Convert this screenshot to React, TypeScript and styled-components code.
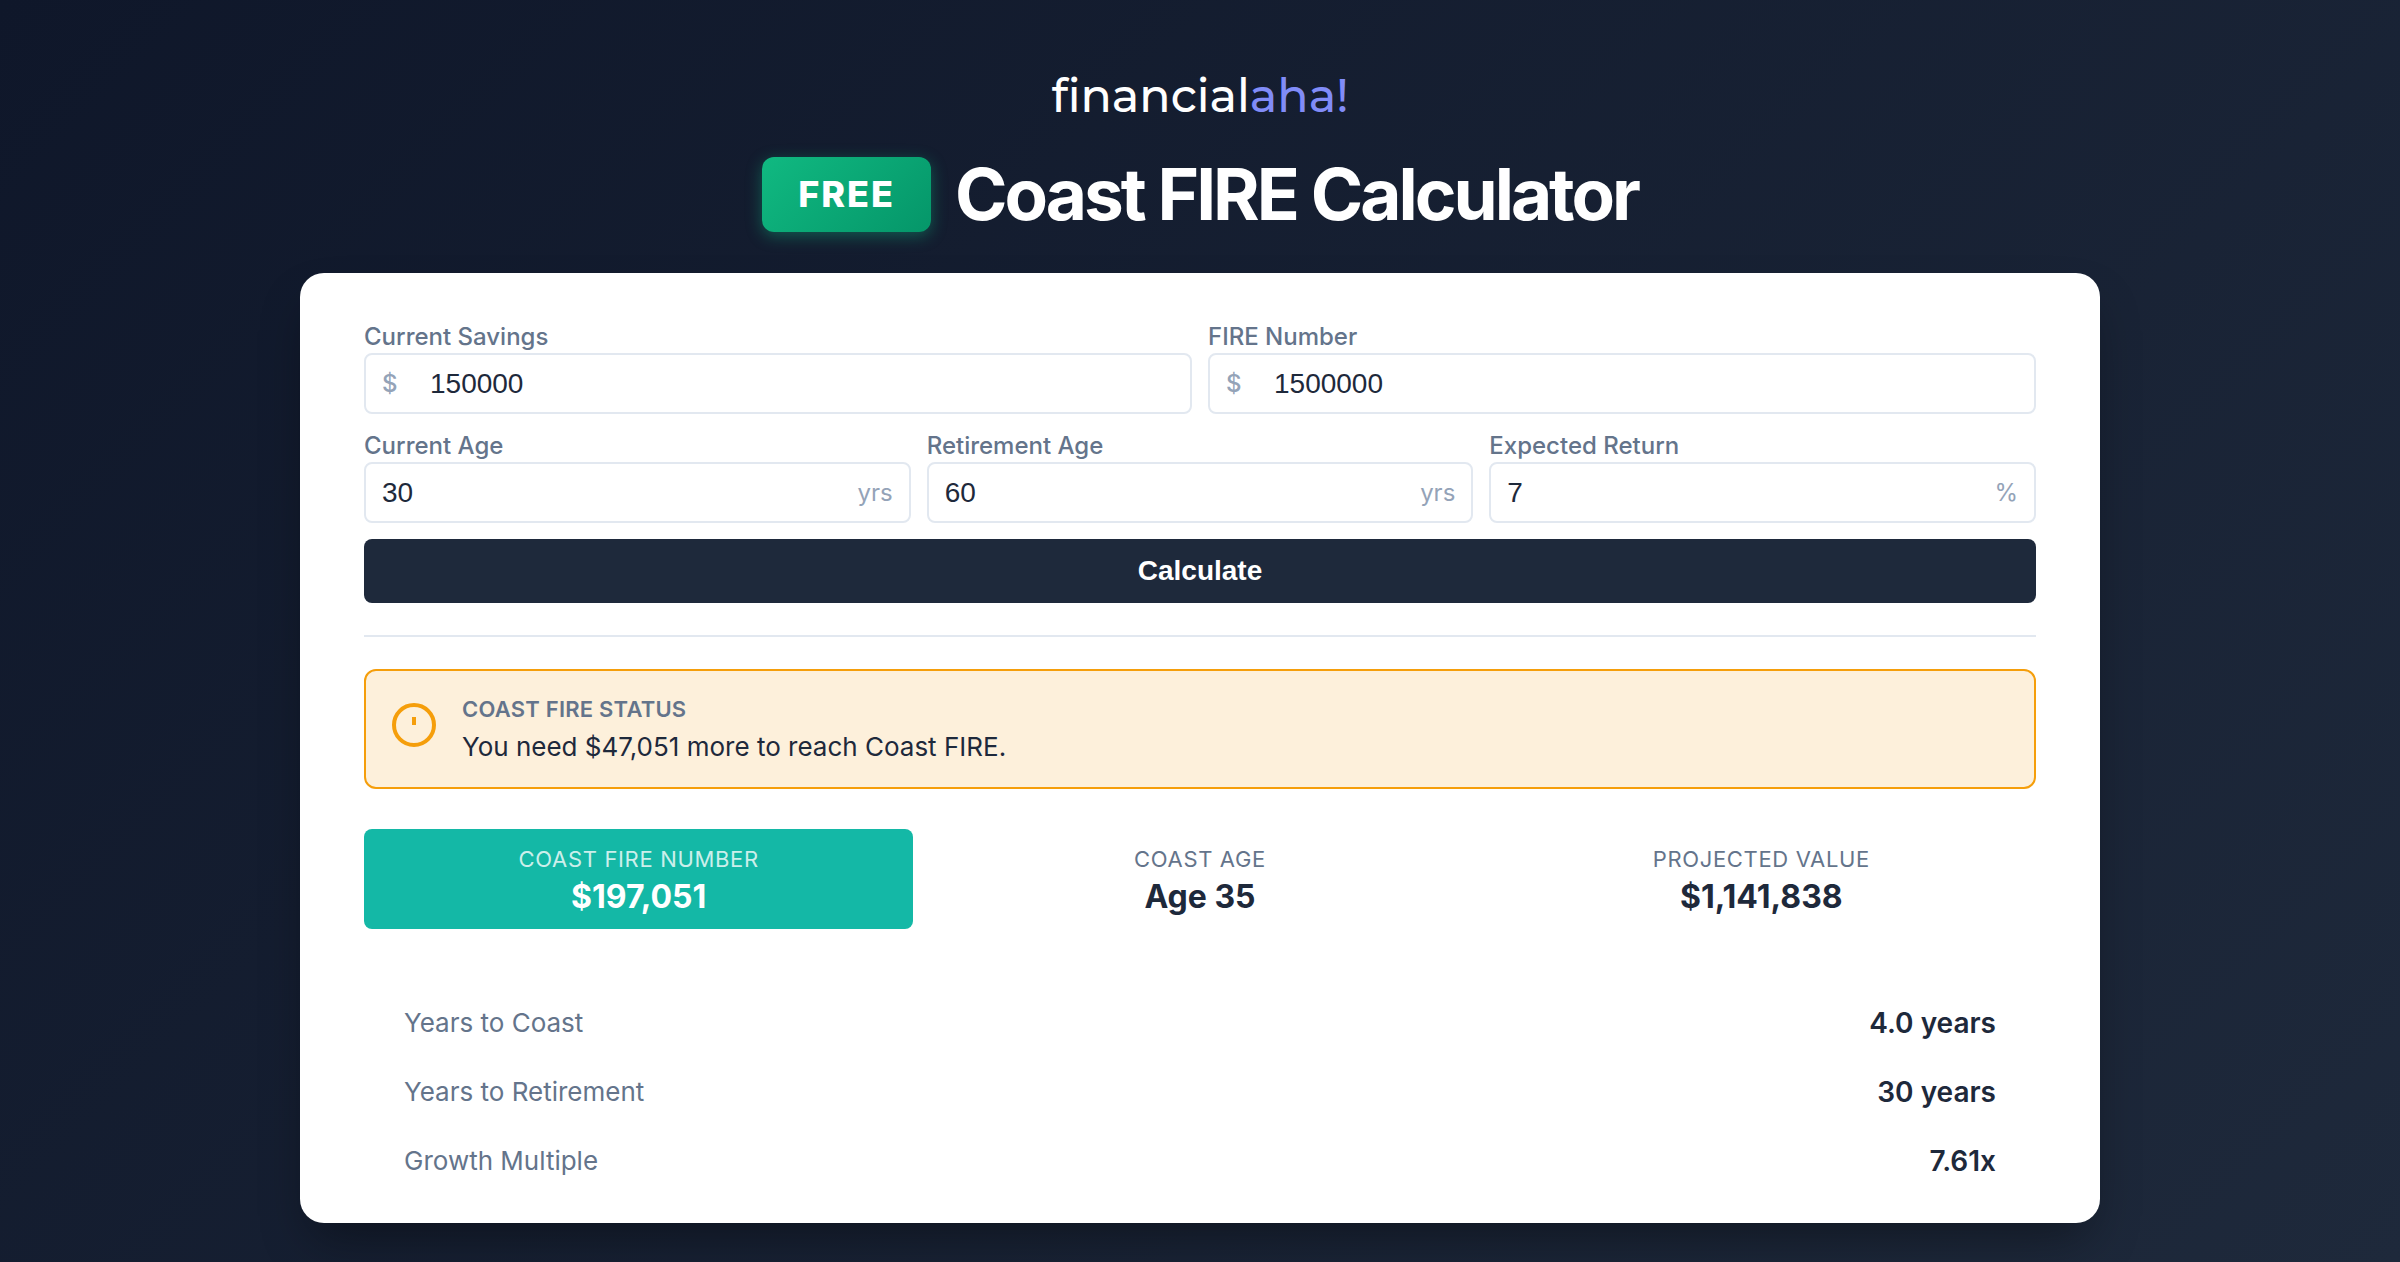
import React, { useState } from "react";
import styled, { createGlobalStyle, css } from "styled-components";

const GlobalStyle = createGlobalStyle`
  *, *::before, *::after { box-sizing: border-box; }
  body {
    margin: 0;
    font-family: Inter, "Liberation Sans", sans-serif;
    color: #1e293b;
    background: #0f172a;
  }
`;

const Page = styled.div`
  min-height: 100vh;
  display: flex;
  flex-direction: column;
  align-items: center;
  padding: 72px 40px 38px;
  background: linear-gradient(135deg, #0f172a 0%, #1e293b 100%);
`;

const Brand = styled.a`
  font-family: Montserrat, Inter, sans-serif;
  font-size: 46px;
  line-height: 48px;
  font-weight: 500;
  color: #ffffff;
  text-decoration: none;
`;

const BrandAccent = styled.span`
  color: #818cf8;
`;

const Heading = styled.div`
  display: flex;
  align-items: center;
  gap: 24px;
  margin: 34px 0 39px;
`;

const FreeBadge = styled.span`
  padding: 16px 36px;
  border-radius: 12px;
  font-size: 36px;
  line-height: 43px;
  font-weight: 800;
  letter-spacing: 2px;
  color: #ffffff;
  background: linear-gradient(135deg, #10b981, #059669);
  box-shadow: 0 4px 16px rgba(16, 185, 129, 0.4);
`;

const Title = styled.h1`
  margin: 0;
  font-size: 71px;
  line-height: 80px;
  font-weight: 700;
  letter-spacing: -3px;
  color: #ffffff;
`;

const Card = styled.main`
  width: 100%;
  max-width: 1800px;
  padding: 48px 64px 28px;
  border-radius: 24px;
  background: #ffffff;
  box-shadow: 0 25px 50px -12px rgba(0, 0, 0, 0.4);
`;

const Form = styled.form`
  display: grid;
  gap: 16px;
  padding-bottom: 32px;
  border-bottom: 2px solid #e2e8f0;
`;

const Fields = styled.div<{ $columns: number }>`
  display: grid;
  grid-template-columns: repeat(${(p) => p.$columns}, 1fr);
  gap: 16px;
`;

const Field = styled.div`
  display: flex;
  flex-direction: column;
`;

const Label = styled.label`
  font-size: 24px;
  line-height: 32px;
  font-weight: 500;
  color: #64748b;
`;

const Control = styled.div`
  display: flex;
  align-items: center;
  height: 61px;
  padding: 0 16px;
  border: 2px solid #e2e8f0;
  border-radius: 8px;
`;

const Input = styled.input`
  flex: 1;
  min-width: 0;
  padding: 0;
  border: 0;
  outline: 0;
  background: none;
  font-family: "Liberation Sans", Arial, sans-serif;
  font-size: 28px;
  line-height: 32px;
  color: #1e293b;
`;

const Unit = styled.span<{ $leading?: boolean }>`
  font-size: 24px;
  line-height: 32px;
  color: #94a3b8;
  ${(p) =>
    p.$leading &&
    css`
      width: 48px;
      font-weight: 500;
    `}
`;

const Submit = styled.button`
  height: 64px;
  border: 0;
  border-radius: 8px;
  background: #1e293b;
  color: #ffffff;
  font-family: "Liberation Sans", Arial, sans-serif;
  font-size: 28px;
  font-weight: 700;
  cursor: pointer;
`;

const Status = styled.section`
  display: flex;
  align-items: center;
  gap: 24px;
  margin-top: 32px;
  padding: 20px 24px;
  border: 2px solid #f59e0b;
  border-radius: 12px;
  background: #fdf0db;
`;

const StatusIcon = styled.div`
  flex: none;
  padding-bottom: 8px;

  svg {
    display: block;
    width: 48px;
    height: 48px;
  }
`;

const StatusTitle = styled.h2`
  margin: 0;
  font-size: 22px;
  line-height: 36px;
  font-weight: 600;
  letter-spacing: 0.01em;
  text-transform: uppercase;
  color: #64748b;
`;

const StatusText = styled.p`
  margin: 0;
  font-size: 26px;
  line-height: 40px;
`;

const Metrics = styled.section`
  display: grid;
  grid-template-columns: repeat(3, 1fr);
  gap: 12px;
  margin-top: 40px;
`;

const Metric = styled.div<{ $highlight?: boolean }>`
  padding: 12px 16px;
  border-radius: 8px;
  text-align: center;
  color: ${(p) => (p.$highlight ? "#ffffff" : "#1e293b")};
  background: ${(p) => (p.$highlight ? "#14b8a6" : "transparent")};
`;

const MetricLabel = styled.div<{ $highlight?: boolean }>`
  font-size: 22px;
  line-height: 36px;
  letter-spacing: 0.03em;
  text-transform: uppercase;
  color: ${(p) => (p.$highlight ? "rgba(255, 255, 255, 0.8)" : "#64748b")};
`;

const MetricValue = styled.div`
  font-size: 32px;
  line-height: 40px;
  font-weight: 700;
`;

const Details = styled.dl`
  margin: 59px 0 0;
  padding: 0 40px;
`;

const DetailRow = styled.div`
  display: flex;
  justify-content: space-between;
  align-items: center;
  height: 69px;
  font-size: 26px;
  line-height: 40px;
`;

const Term = styled.dt`
  color: #64748b;
`;

const Value = styled.dd`
  margin: 0;
  font-size: 28px;
  font-weight: 600;
`;

type FieldSpec = {
  id: string;
  label: string;
  value: string;
  prefix?: string;
  suffix?: string;
};

const moneyFields: FieldSpec[] = [
  { id: "savings", label: "Current Savings", value: "150000", prefix: "$" },
  { id: "fire-number", label: "FIRE Number", value: "1500000", prefix: "$" },
];

const planFields: FieldSpec[] = [
  { id: "current-age", label: "Current Age", value: "30", suffix: "yrs" },
  { id: "retirement-age", label: "Retirement Age", value: "60", suffix: "yrs" },
  { id: "return", label: "Expected Return", value: "7", suffix: "%" },
];

const metrics = [
  { label: "Coast FIRE Number", value: "$197,051", highlight: true },
  { label: "Coast Age", value: "Age 35" },
  { label: "Projected Value", value: "$1,141,838" },
];

const details = [
  { term: "Years to Coast", value: "4.0 years" },
  { term: "Years to Retirement", value: "30 years" },
  { term: "Growth Multiple", value: "7.61x" },
];

function NumberField({ spec }: { spec: FieldSpec }) {
  const [value, setValue] = useState(spec.value);
  return (
    <Field>
      <Label htmlFor={spec.id}>{spec.label}</Label>
      <Control>
        {spec.prefix && <Unit $leading>{spec.prefix}</Unit>}
        <Input
          id={spec.id}
          inputMode="decimal"
          value={value}
          onChange={(e) => setValue(e.target.value)}
        />
        {spec.suffix && <Unit>{spec.suffix}</Unit>}
      </Control>
    </Field>
  );
}

export default function App() {
  return (
    <>
      <GlobalStyle />
      <Page>
        <Brand href="#">
          financial<BrandAccent>aha!</BrandAccent>
        </Brand>
        <Heading>
          <FreeBadge>FREE</FreeBadge>
          <Title>Coast FIRE Calculator</Title>
        </Heading>
        <Card>
          <Form onSubmit={(e) => e.preventDefault()}>
            <Fields $columns={2}>
              {moneyFields.map((f) => (
                <NumberField key={f.id} spec={f} />
              ))}
            </Fields>
            <Fields $columns={3}>
              {planFields.map((f) => (
                <NumberField key={f.id} spec={f} />
              ))}
            </Fields>
            <Submit type="submit">Calculate</Submit>
          </Form>
          <Status>
            <StatusIcon>
              <svg viewBox="0 0 24 24" fill="none" stroke="#f59e0b" strokeWidth="2" aria-hidden="true">
                <circle cx="12" cy="12" r="10" />
                <path d="M12 8v4" />
              </svg>
            </StatusIcon>
            <div>
              <StatusTitle>Coast FIRE Status</StatusTitle>
              <StatusText>You need $47,051 more to reach Coast FIRE.</StatusText>
            </div>
          </Status>
          <Metrics>
            {metrics.map((m) => (
              <Metric key={m.label} $highlight={m.highlight}>
                <MetricLabel $highlight={m.highlight}>{m.label}</MetricLabel>
                <MetricValue>{m.value}</MetricValue>
              </Metric>
            ))}
          </Metrics>
          <Details>
            {details.map((d) => (
              <DetailRow key={d.term}>
                <Term>{d.term}</Term>
                <Value>{d.value}</Value>
              </DetailRow>
            ))}
          </Details>
        </Card>
      </Page>
    </>
  );
}
